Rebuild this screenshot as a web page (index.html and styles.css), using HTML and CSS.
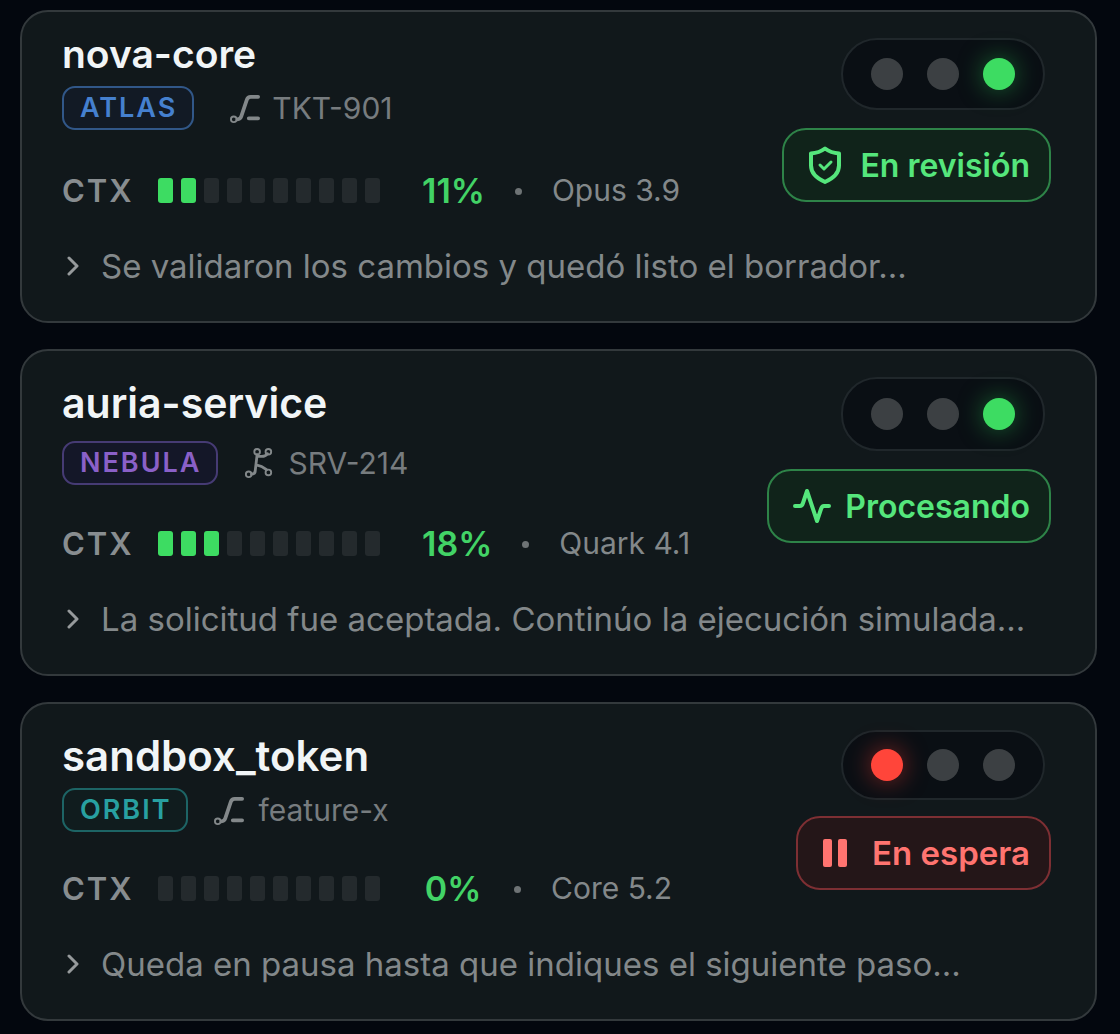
FILE: index.html
```
<!DOCTYPE html>
<html lang="es">
<head>
    <meta charset="UTF-8">
    <meta name="viewport" content="width=device-width, initial-scale=1.0">
    <title>Sesiones</title>
    <link rel="stylesheet" href="styles.css">
</head>
<body>
    <main class="sessions">
        <article class="card compact">
            <div class="card-top">
                <div class="info">
                    <h2>nova-core</h2>
                    <div class="tags">
                        <span class="badge blue">ATLAS</span>
                        <svg class="branch wide" viewBox="0 0 32 32"><circle cx="4" cy="28" r="3"/><path d="M8 28q3 0 4-3l6-18q1-3 4-3h8M20 27h10"/></svg>
                        <span class="ref">TKT-901</span>
                    </div>
                    <div class="ctx">
                        <span class="ctx-label">CTX</span>
                        <div class="bar"><i class="on"></i><i class="on"></i><i></i><i></i><i></i><i></i><i></i><i></i><i></i><i></i></div>
                        <strong>11%</strong>
                        <span class="sep"></span>
                        <span class="model">Opus 3.9</span>
                    </div>
                </div>
                <div class="state">
                    <div class="lights"><i></i><i></i><i class="green"></i></div>
                    <div class="status ok">
                        <svg class="shield" viewBox="0 0 34 38"><path d="M17 2.500c4 3 8 4.500 14 5v12c0 8-5 12.500-14 16.500C8 32 3 27.500 3 19.500v-12c6-.5 10-2 14-5z"/><path class="thin" d="M12 19l4 4 7-7"/></svg>
                        <span>En revisión</span>
                    </div>
                </div>
            </div>
            <p class="message"><svg class="chevron" viewBox="0 0 14 22"><path d="M2 3l8 8-8 8"/></svg>Se validaron los cambios y quedó listo el borrador...</p>
        </article>

        <article class="card roomy">
            <div class="card-top">
                <div class="info">
                    <h2>auria-service</h2>
                    <div class="tags">
                        <span class="badge purple">NEBULA</span>
                        <svg class="branch" viewBox="0 0 32 32"><circle cx="5" cy="28" r="3"/><circle cx="14" cy="4" r="3"/><circle cx="26" cy="4" r="3"/><circle cx="26" cy="26" r="3"/><path class="thin" d="M8 28q4 0 4-4l2-17M14 9h5q4 0 6-3M13 18q6 1 11 5"/></svg>
                        <span class="ref">SRV-214</span>
                    </div>
                    <div class="ctx">
                        <span class="ctx-label">CTX</span>
                        <div class="bar"><i class="on"></i><i class="on"></i><i class="on"></i><i></i><i></i><i></i><i></i><i></i><i></i><i></i></div>
                        <strong>18%</strong>
                        <span class="sep"></span>
                        <span class="model">Quark 4.1</span>
                    </div>
                </div>
                <div class="state">
                    <div class="lights"><i></i><i></i><i class="green"></i></div>
                    <div class="status ok">
                        <svg class="pulse" viewBox="0 0 38 36"><path d="M2 18h5q2 0 3-3l4-12 10 30 4-12q1-3 3-3h5"/></svg>
                        <span>Procesando</span>
                    </div>
                </div>
            </div>
            <p class="message"><svg class="chevron" viewBox="0 0 14 22"><path d="M2 3l8 8-8 8"/></svg>La solicitud fue aceptada. Continúo la ejecución simulada...</p>
        </article>

        <article class="card paused">
            <div class="card-top">
                <div class="info">
                    <h2>sandbox_token</h2>
                    <div class="tags">
                        <span class="badge teal">ORBIT</span>
                        <svg class="branch" viewBox="0 0 32 32"><circle cx="4" cy="28" r="3"/><path d="M8 28q3 0 4-3l6-18q1-3 4-3h8M20 27h10"/></svg>
                        <span class="ref">feature-x</span>
                    </div>
                    <div class="ctx">
                        <span class="ctx-label">CTX</span>
                        <div class="bar"><i></i><i></i><i></i><i></i><i></i><i></i><i></i><i></i><i></i><i></i></div>
                        <strong>0%</strong>
                        <span class="sep"></span>
                        <span class="model">Core 5.2</span>
                    </div>
                </div>
                <div class="state">
                    <div class="lights"><i class="red"></i><i></i><i></i></div>
                    <div class="status wait">
                        <svg class="pause" viewBox="0 0 26 30"><rect x="1" y="1" width="9" height="28" rx="2"/><rect x="16" y="1" width="9" height="28" rx="2"/></svg>
                        <span>En espera</span>
                    </div>
                </div>
            </div>
            <p class="message"><svg class="chevron" viewBox="0 0 14 22"><path d="M2 3l8 8-8 8"/></svg>Queda en pausa hasta que indiques el siguiente paso...</p>
        </article>
    </main>
</body>
</html>
```
FILE: styles.css
```
* {
    box-sizing: border-box;
}
body {
    margin: 0;
    background-color: #03070e;
    color: #83888a;
    font-family: Inter, "Liberation Sans", sans-serif;
}
.sessions {
    display: flex;
    flex-direction: column;
    gap: 26px;
    padding: 10px 23px 13px 20px;
}
h2, p {
    margin: 0;
}
svg {
    flex: none;
    fill: none;
    stroke: currentColor;
    stroke-width: 3px;
    stroke-linecap: round;
    stroke-linejoin: round;
}
.card {
    padding: 26px 44px 31px 40px;
    background: #11181b;
    border: 2px solid #33393c;
    border-radius: 28px;
}
.card-top {
    display: flex;
    justify-content: space-between;
}
h2 {
    color: #f1f5f7;
    font-size: 41px;
    font-weight: 600;
    line-height: 52px;
}
.tags {
    display: flex;
    align-items: center;
    height: 44px;
    margin-top: 6px;
    font-size: 30px;
}
.badge {
    padding: 0 15px 0 16px;
    border: 2px solid;
    border-radius: 13px;
    font-size: 27px;
    font-weight: 600;
    line-height: 40px;
    letter-spacing: 2px;
}
.blue {
    color: #4580cf;
    background: #121a25;
    border-color: #315788;
}
.purple {
    color: #8a60c8;
    background: #141728;
    border-color: #463b74;
}
.teal {
    color: #28a0a1;
    background: #101c1e;
    border-color: #1d6465;
}
.branch {
    width: 30px;
    height: 30px;
    margin: 0 14px 0 26px;
    stroke-width: 4px;
}
.branch.wide {
    margin: 0 12px 0 36px;
}
.branch circle {
    stroke-width: 2px;
}
.thin {
    stroke-width: 3px;
}
.ref {
    color: #777c7f;
}
.ctx {
    display: flex;
    align-items: center;
    height: 40px;
    margin-top: 36px;
    font-size: 30px;
}
.ctx-label {
    width: 96px;
    color: #888d90;
    font-size: 31px;
    font-weight: 600;
    letter-spacing: 2px;
}
.bar {
    display: flex;
    gap: 8px;
}
.bar i {
    width: 15px;
    height: 25px;
    border-radius: 3px;
    background: #242a2d;
}
.bar .on {
    background: #3ddc62;
}
.ctx strong {
    min-width: 62px;
    margin-left: 42px;
    color: #42d366;
    font-size: 34px;
    font-weight: 600;
    text-align: center;
}
.sep {
    width: 7px;
    height: 7px;
    margin: 2px 30px 0;
    border-radius: 50%;
    background: #6e7375;
}
.message {
    display: flex;
    align-items: center;
    margin-top: 32px;
    font-size: 33px;
    line-height: 48px;
}
.chevron {
    width: 14px;
    height: 22px;
    margin: 0 20px 0 5px;
    color: #969a9c;
}
.state {
    display: flex;
    flex-direction: column;
    align-items: flex-end;
    gap: 18px;
}
.lights {
    display: flex;
    align-items: center;
    gap: 24px;
    height: 72px;
    margin-right: 6px;
    padding: 0 28px;
    background: #0a0f14;
    border: 2px solid #20272b;
    border-radius: 36px;
}
.lights i {
    width: 32px;
    height: 32px;
    border-radius: 50%;
    background: #3c4043;
}
.lights .green {
    background: #3ddc62;
    box-shadow: 0 0 24px rgba(40, 190, 80, 0.5);
}
.lights .red {
    background: #ff453a;
    box-shadow: 0 0 24px rgba(255, 60, 50, 0.5);
}
.status {
    display: flex;
    align-items: center;
    height: 74px;
    padding: 0 19px 0 24px;
    border: 2px solid;
    border-radius: 24px;
    font-size: 32px;
    font-weight: 600;
}
.ok {
    color: #55e67c;
    background: #10231a;
    border-color: #2e8348;
}
.wait {
    color: #ff7470;
    background: #241618;
    border-color: #7d2f33;
    font-size: 33px;
}
.shield {
    width: 34px;
    height: 38px;
    margin-right: 18px;
    stroke-width: 4px;
}
.pulse {
    width: 38px;
    height: 36px;
    margin-right: 14px;
    stroke-width: 4px;
}
.pause {
    width: 26px;
    height: 30px;
    margin-right: 24px;
    fill: currentColor;
    stroke: none;
}

/* vertical rhythm of the individual cards */
.compact .info {
    margin-top: -10px;
}
.compact h2 {
    font-size: 39px;
}
.compact .ctx {
    margin-top: 40px;
}
.roomy .tags {
    margin-top: 12px;
}
.roomy .ctx {
    margin-top: 38px;
}
.roomy .lights {
    height: 74px;
}
.paused h2 {
    font-size: 42px;
}
.paused .state {
    gap: 16px;
}
.paused .lights {
    height: 70px;
}
```
